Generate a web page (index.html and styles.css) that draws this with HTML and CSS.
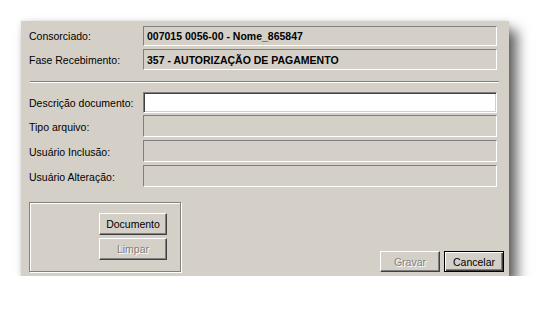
FILE: index.html
```html
<!DOCTYPE html>
<html lang="pt">
<head>
<meta charset="utf-8">
<title>Documento</title>
<link rel="stylesheet" href="styles.css">
</head>
<body>
<div class="stage">
  <div class="panel">
    <div class="grid top">
      <span class="label">Consorciado:</span>
      <div class="field ro bold">007015 0056-00 - Nome_865847</div>
      <span class="label">Fase Recebimento:</span>
      <div class="field ro bold tall">357 - AUTORIZAÇÃO DE PAGAMENTO</div>
    </div>
    <div class="sep"></div>
    <div class="grid lower">
      <span class="label">Descrição documento:</span>
      <div class="field edit"></div>
      <span class="label">Tipo arquivo:</span>
      <div class="field ro tall"></div>
      <span class="label">Usuário Inclusão:</span>
      <div class="field ro tall"></div>
      <span class="label">Usuário Alteração:</span>
      <div class="field ro tall"></div>
    </div>
    <div class="bottom">
      <div class="group">
        <button class="btn">Documento</button>
        <button class="btn disabled">Limpar</button>
      </div>
      <div class="actions">
        <button class="btn wide disabled">Gravar</button>
        <button class="btn wide default">Cancelar</button>
      </div>
    </div>
  </div>
</div>
</body>
</html>
```

FILE: styles.css
```css
html, body {
  margin: 0;
  padding: 0;
  background: #ffffff;
}

.stage {
  padding: 21px 0 0 21px;
}

.panel {
  box-sizing: border-box;
  width: 488px;
  height: 255px;
  background: #d4d0c8;
  padding: 5px 5px 4px 8px;
  font-family: "Liberation Sans", Arial, sans-serif;
  font-size: 10.5px;
  color: #000;
  box-shadow: 8px 9px 12px rgba(0, 0, 0, 0.62), 0 0 5px rgba(0, 0, 0, 0.12);
  display: flex;
  flex-direction: column;
}

.grid {
  display: grid;
  grid-template-columns: 114px 354px;
  align-items: center;
}

.top {
  row-gap: 3px;
}

.lower {
  row-gap: 2px;
  margin-top: 9px;
}

.lower .tall + .label {
  margin-top: 1px;
}

.lower .ro.tall {
  margin-bottom: 1px;
}

.label {
  white-space: nowrap;
  padding-left: 0;
}

.field {
  box-sizing: border-box;
  height: 21px;
  padding: 0 3px;
  display: flex;
  align-items: center;
  white-space: nowrap;
}

.top .field {
  height: 20px;
}

.top .field.tall {
  height: 21px;
}

.lower .field.tall {
  height: 22px;
}

.ro {
  background: #d4d0c8;
  border-top: 1px solid #808080;
  border-left: 1px solid #808080;
  border-right: 1px solid #ffffff;
  border-bottom: 1px solid #ffffff;
}

.edit {
  background: #ffffff;
  border-top: 1px solid #808080;
  border-left: 1px solid #808080;
  border-right: 1px solid #ffffff;
  border-bottom: 1px solid #ffffff;
  box-shadow: inset 1px 1px 0 #404040, inset -1px -1px 0 #d4d0c8;
}

.bold {
  font-weight: bold;
}

.sep {
  width: 469px;
  margin: 11px 0 0 1px;
  border-top: 1px solid #808080;
  border-bottom: 1px solid #ffffff;
}

.bottom {
  margin-top: auto;
  display: flex;
  justify-content: space-between;
  align-items: flex-end;
}

.group {
  box-sizing: border-box;
  width: 152px;
  height: 70px;
  border: 1px solid #808080;
  box-shadow: inset 1px 1px 0 #ffffff, 1px 1px 0 #ffffff;
  padding: 10px 0 0 69px;
  display: flex;
  flex-direction: column;
  gap: 3px;
}

.btn {
  box-sizing: border-box;
  width: 68px;
  height: 22px;
  margin: 0;
  padding: 0;
  font-family: "Liberation Sans", Arial, sans-serif;
  font-size: 10.5px;
  color: #000;
  background: #d4d0c8;
  border-top: 1px solid #ffffff;
  border-left: 1px solid #ffffff;
  border-right: 1px solid #404040;
  border-bottom: 1px solid #404040;
  box-shadow: inset -1px -1px 0 #808080;
}

.btn.wide {
  width: 60px;
  height: 21px;
}

.btn.disabled {
  color: #808080;
  text-shadow: 1px 1px 0 #ffffff;
}

.btn.default {
  border: 1px solid #000000;
  box-shadow: inset 1px 1px 0 #ffffff, inset -1px -1px 0 #404040, inset -2px -2px 0 #808080;
}

.actions {
  display: flex;
  gap: 4px;
}
```
